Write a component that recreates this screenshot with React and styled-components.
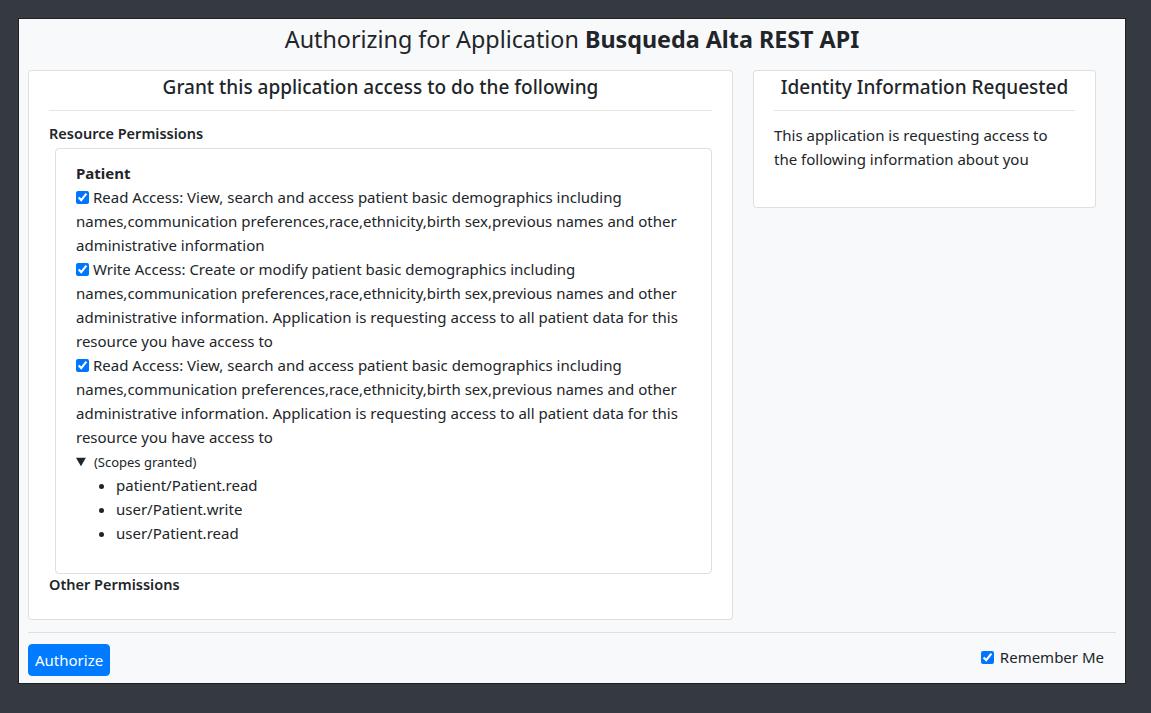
import React from 'react';
import styled, { createGlobalStyle } from 'styled-components';

const GlobalStyle = createGlobalStyle`
  html, body {
    margin: 0;
    padding: 0;
    background: #343a40;
  }
  body {
    font-family: "Noto Sans", "Open Sans", sans-serif;
    font-size: 15px;
    line-height: 24px;
    color: #212529;
  }
  * {
    box-sizing: border-box;
  }
`;

const Page = styled.div`
  padding: 18px 25px 30px 18px;
`;

const Container = styled.div`
  background: #f8f9fa;
  border: 1px solid #1d2124;
  padding: 6px 9px 7px 9px;
`;

const Title = styled.h4`
  margin: 0 0 16px;
  font-size: 23.3px;
  line-height: 29px;
  font-weight: 400;
  text-align: center;

  b {
    font-weight: 700;
  }
`;

const Row = styled.div`
  display: grid;
  grid-template-columns: 705px 343px;
  gap: 20px;
  align-items: start;
`;

const Card = styled.div`
  background: #fff;
  border: 1px solid rgba(0, 0, 0, 0.125);
  border-radius: 4px;
  padding: ${(props) => props.$padding || '4px 20px 20px'};
`;

const CardTitle = styled.h5`
  margin: 0;
  font-size: 19px;
  line-height: 24px;
  font-weight: 500;
  text-align: center;
`;

const Rule = styled.hr`
  border: 0;
  border-top: 1px solid rgba(0, 0, 0, 0.1);
  margin: ${(props) => props.$margin || '11px 0 12px'};
`;

const SectionLabel = styled.div`
  font-size: 14.5px;
  font-weight: 600;
  line-height: 21px;
`;

const ResourceBox = styled.div`
  margin: 4px 0 0 6px;
  border: 1px solid rgba(0, 0, 0, 0.125);
  border-radius: 4px;
  padding: 12px 20px 12px 20px;
`;

const ResourceName = styled.div`
  font-weight: 700;
`;

const Permission = styled.label`
  display: block;

  input {
    width: 13px;
    height: 13px;
    margin: 0 4px 0 0;
    vertical-align: -1px;
  }
`;

const Scopes = styled.details`
  summary {
    line-height: 22px;
    padding-top: 1px;
    cursor: pointer;
  }

  small {
    font-size: 13px;
    margin-left: 2px;
  }

  ul {
    margin: 0 0 16px;
    padding-left: 40px;
  }
`;

const Paragraph = styled.p`
  margin: 0 0 16px;
  max-width: 290px;
`;

const Footer = styled.div`
  display: flex;
  align-items: center;
  justify-content: space-between;
`;

const Button = styled.button`
  font-family: inherit;
  font-size: 15px;
  line-height: 24px;
  color: #fff;
  background: #007bff;
  border: 1px solid #007bff;
  border-radius: 4px;
  padding: 3px 6px;
`;

const Remember = styled.label`
  display: flex;
  align-items: center;
  gap: 6px;
  margin-right: 12px;
  margin-top: -6px;

  input {
    width: 13px;
    height: 13px;
    margin: 0;
  }
`;

const permissions = [
  'Read Access: View, search and access patient basic demographics including names,communication preferences,race,ethnicity,birth sex,previous names and other administrative information',
  'Write Access: Create or modify patient basic demographics including names,communication preferences,race,ethnicity,birth sex,previous names and other administrative information. Application is requesting access to all patient data for this resource you have access to',
  'Read Access: View, search and access patient basic demographics including names,communication preferences,race,ethnicity,birth sex,previous names and other administrative information. Application is requesting access to all patient data for this resource you have access to',
];

const scopes = ['patient/Patient.read', 'user/Patient.write', 'user/Patient.read'];

export default function App() {
  return (
    <Page>
      <GlobalStyle />
      <Container>
        <Title>
          Authorizing for Application <b>Busqueda Alta REST API</b>
        </Title>
        <Row>
          <Card $padding="4px 20px 24px">
            <CardTitle>Grant this application access to do the following</CardTitle>
            <Rule />
            <SectionLabel>Resource Permissions</SectionLabel>
            <ResourceBox>
              <ResourceName>Patient</ResourceName>
              {permissions.map((text, idx) => (
                <Permission key={idx}>
                  <input type="checkbox" defaultChecked />
                  {text}
                </Permission>
              ))}
              <Scopes open>
                <summary>
                  <small>(Scopes granted)</small>
                </summary>
                <ul>
                  {scopes.map((s) => (
                    <li key={s}>{s}</li>
                  ))}
                </ul>
              </Scopes>
            </ResourceBox>
            <SectionLabel>Other Permissions</SectionLabel>
          </Card>
          <Card>
            <CardTitle>Identity Information Requested</CardTitle>
            <Rule />
            <Paragraph>
              This application is requesting access to the following information about you
            </Paragraph>
          </Card>
        </Row>
        <Rule $margin="12px 0 11px" />
        <Footer>
          <Button>Authorize</Button>
          <Remember>
            <input type="checkbox" defaultChecked />
            Remember Me
          </Remember>
        </Footer>
      </Container>
    </Page>
  );
}
